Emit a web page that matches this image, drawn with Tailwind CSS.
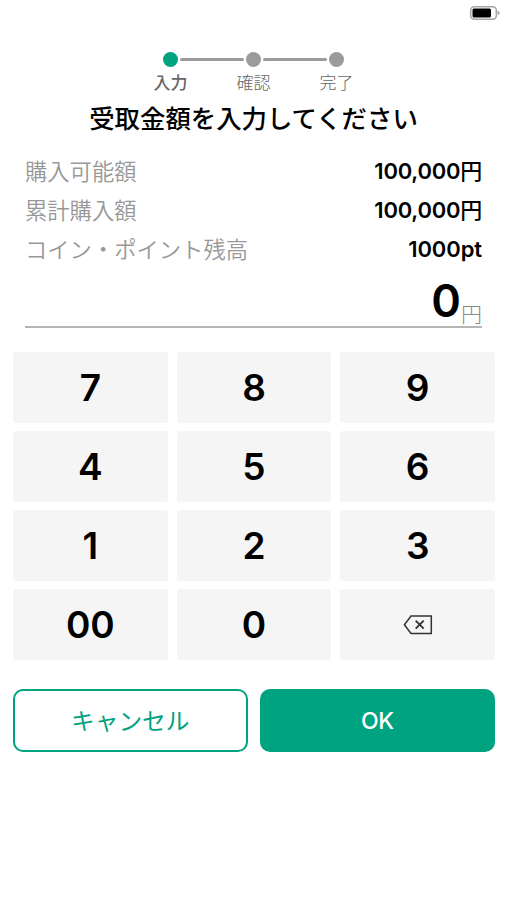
<!DOCTYPE html>
<html lang="ja">
<head>
<meta charset="utf-8">
<title>受取金額</title>
<script src="https://cdn.jsdelivr.net/npm/@tailwindcss/browser@4"></script>
</head>
<body class="bg-white">
<div class="h-[900px] w-[507px] overflow-hidden bg-white font-['Inter','Noto_Sans_CJK_JP',sans-serif] text-black">
  <header class="flex h-[52px] justify-end pt-[5px] pr-[6px]">
    <svg class="h-[16px] w-[32px]" viewBox="0 0 32 16" fill="none">
      <rect x="1.7" y="1.7" width="25.6" height="12.6" rx="3.5" stroke="#a5a5a5" stroke-width="1.5"/>
      <rect x="3.5" y="3.5" width="18.5" height="9" rx="1.5" fill="#000"/>
      <path d="M28.6 5.6c2.8 1 2.8 3.8 0 4.8z" fill="#a5a5a5"/>
    </svg>
  </header>

  <div class="mx-auto flex h-[15px] w-[181px] items-center justify-between">
    <i class="size-[15px] rounded-full bg-[#00a37f]"></i>
    <i class="h-[2.5px] w-[64px] rounded bg-[#9b9b9b]"></i>
    <i class="size-[15px] rounded-full bg-[#9b9b9b]"></i>
    <i class="h-[2.5px] w-[64px] rounded bg-[#9b9b9b]"></i>
    <i class="size-[15px] rounded-full bg-[#9b9b9b]"></i>
  </div>
  <div class="mx-auto grid h-[32px] w-[249px] grid-cols-3 text-center text-[17px] leading-[32px] font-light text-[#666]">
    <span class="font-medium">入力</span><span>確認</span><span>完了</span>
  </div>
  <h1 class="h-[40px] text-center text-[25.4px] leading-[40px] font-medium">受取金額を入力してください</h1>

  <div class="mt-[13px] px-[25px]">
    <div class="flex h-[39px] items-center justify-between"><span class="text-[22.3px] font-[350] text-[#989898]">購入可能額</span><span class="text-[22px] font-[580] tracking-[-0.25px]">100,000<span class="font-medium">円</span></span></div>
    <div class="flex h-[39px] items-center justify-between"><span class="text-[22.3px] font-[350] text-[#989898]">累計購入額</span><span class="text-[22px] font-[580] tracking-[-0.25px]">100,000<span class="font-medium">円</span></span></div>
    <div class="flex h-[39px] items-center justify-between"><span class="text-[22.3px] font-[350] text-[#989898]">コイン・ポイント残高</span><span class="text-[22px] font-[580] tracking-[-0.1px]">1000pt</span></div>
    <div class="flex h-[59px] justify-end border-b-2 border-[#b5b5b5]">
      <span class="text-[45px] leading-[63px] font-[580]">0</span>
      <span class="pt-[32px] text-[21px] leading-[28px] font-light text-[#888]">円</span>
    </div>
  </div>

  <div class="mr-[12px] ml-[13px] mt-[24px] grid grid-cols-3 gap-x-[9px] gap-y-[8px] text-center text-[37px] leading-[71px] font-[570] *:h-[71px] *:rounded-[3px] *:bg-[#f5f5f5]">
    <button>7</button><button>8</button><button>9</button>
    <button>4</button><button>5</button><button>6</button>
    <button>1</button><button>2</button><button>3</button>
    <button>00</button><button>0</button>
    <button class="flex items-center justify-center" aria-label="削除">
      <svg class="h-[20px] w-[30px]" viewBox="0 0 30 20" fill="none" stroke="#333">
        <path d="M8 1h20.3v17.4H8L1.4 9.7z" stroke-width="1.5"/>
        <path d="M12.7 5.7l8 8M20.7 5.7l-8 8" stroke-width="1.9"/>
      </svg>
    </button>
  </div>

  <div class="mr-[12.5px] ml-[13px] mt-[29px] grid h-[63px] grid-cols-2 gap-[12.5px] text-[23px]">
    <button class="rounded-[10px] border-2 border-[#00a37f] font-['Noto_Sans_CJK_JP',sans-serif] text-[23.7px] font-normal text-[#00a37f]">キャンセル</button>
    <button class="rounded-[10px] bg-[#00a37f] pt-[2px] font-medium tracking-[-0.5px] text-white">OK</button>
  </div>
</div>
</body>
</html>
